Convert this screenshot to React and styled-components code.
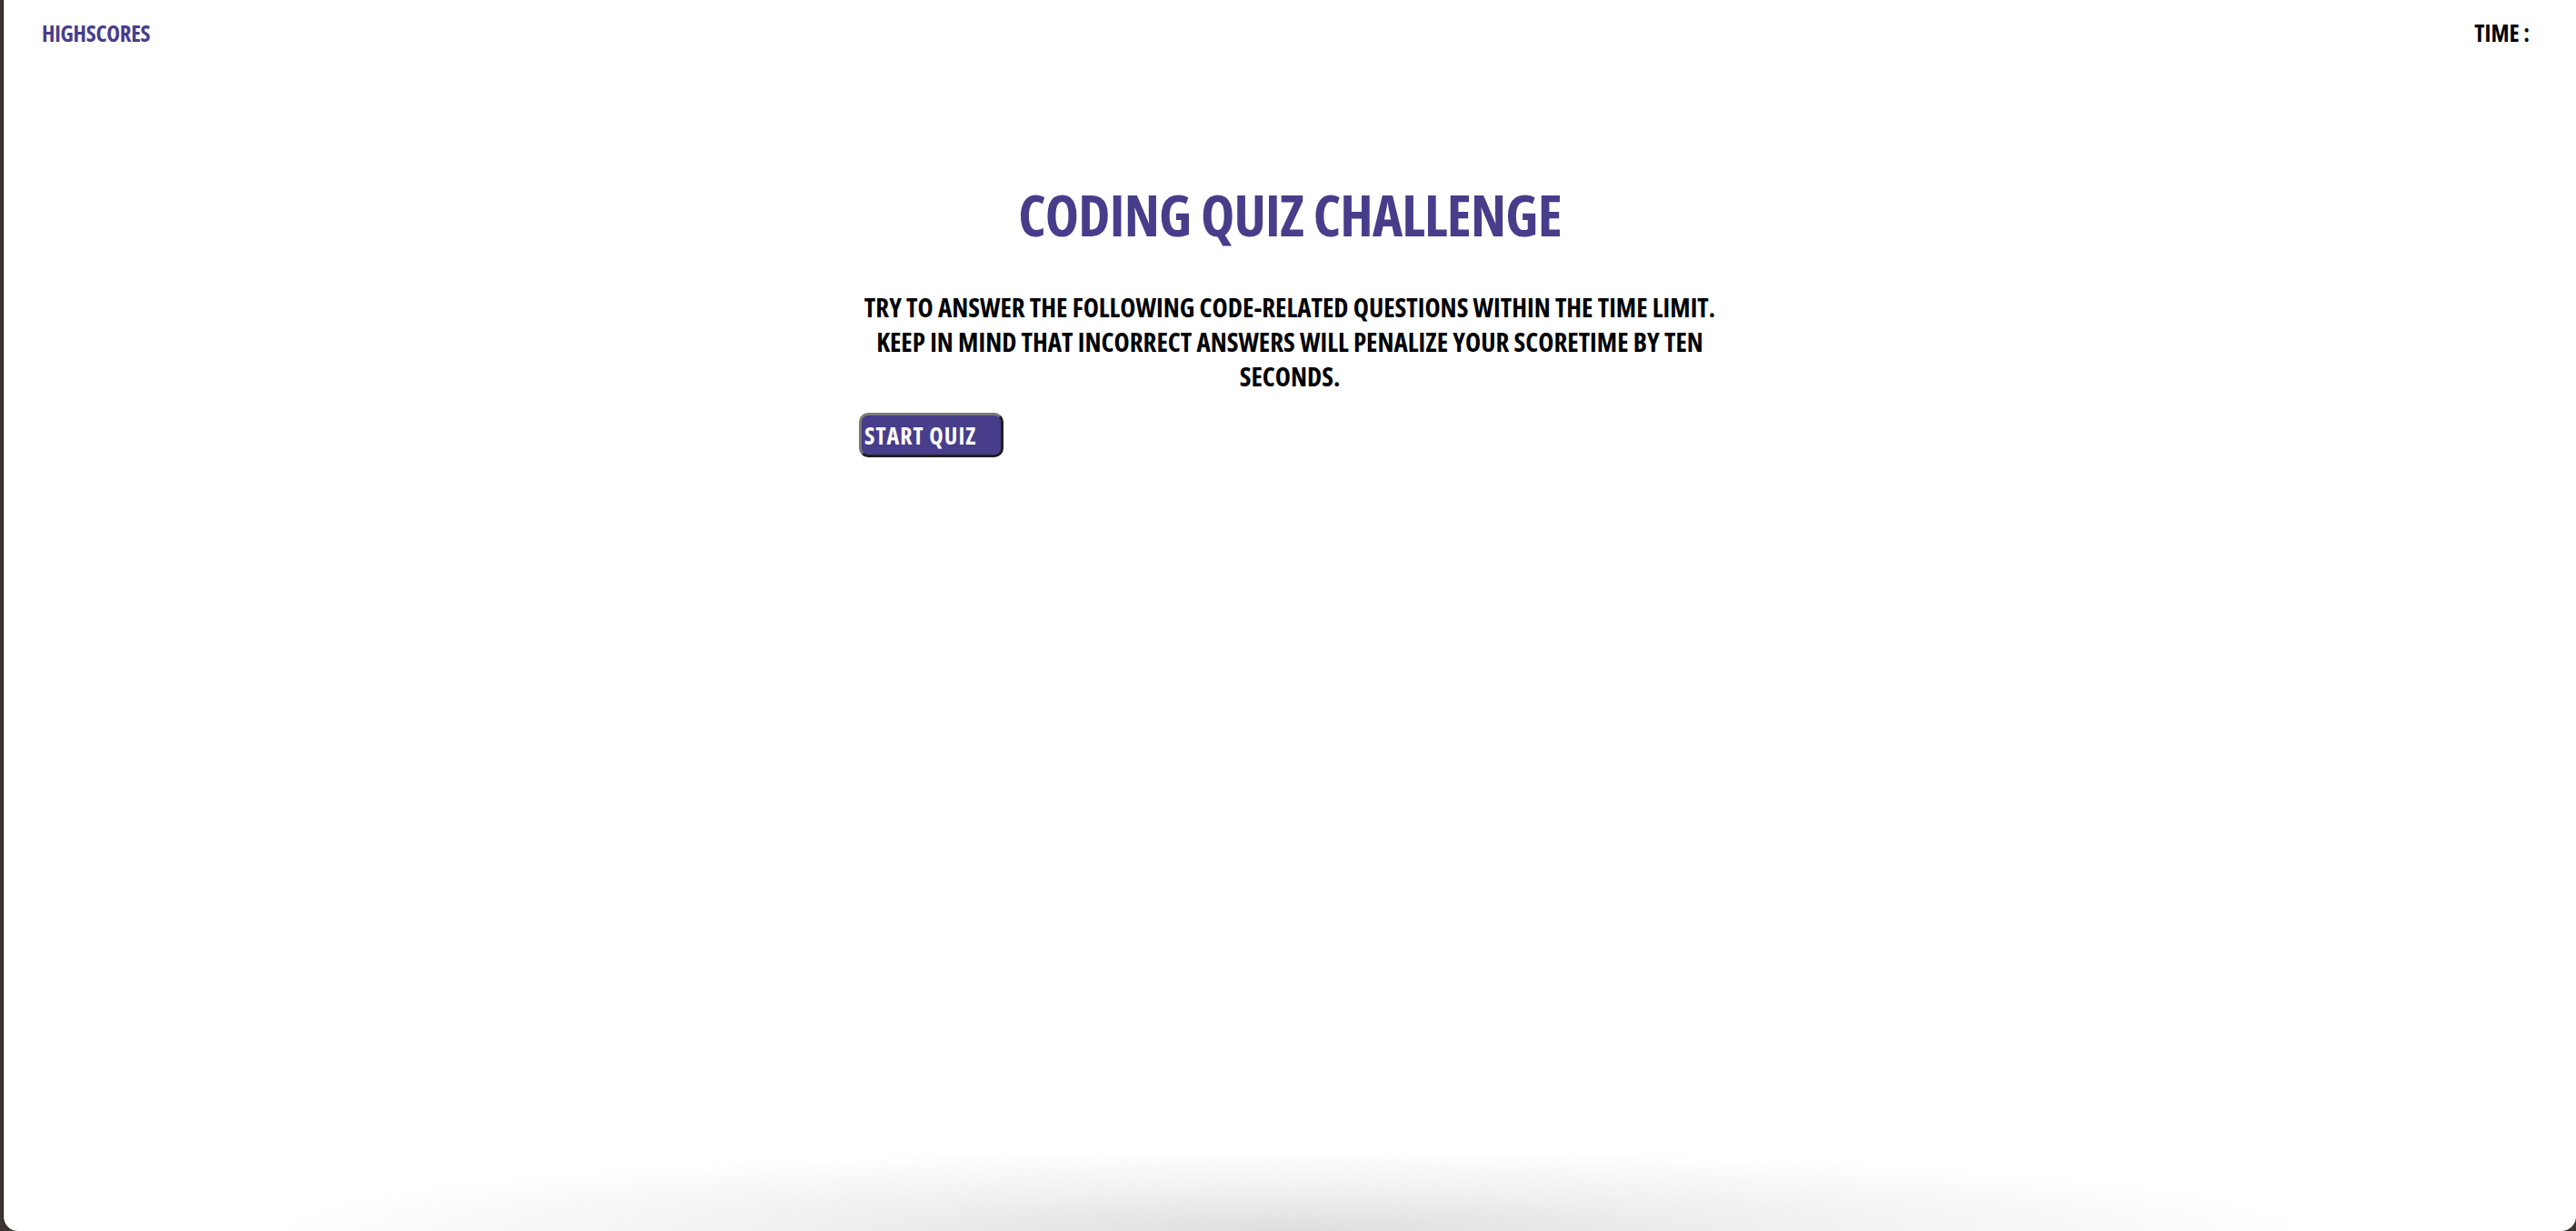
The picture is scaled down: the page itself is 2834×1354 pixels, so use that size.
import React from "react";
import styled, { createGlobalStyle } from "styled-components";

const GlobalStyle = createGlobalStyle`
  html, body {
    margin: 0;
    padding: 0;
    background: #3b3430;
  }
  * { box-sizing: border-box; }
`;

const Frame = styled.div`
  margin-left: 3px;
  height: 1354px;
  border-left: 1px solid #111;
  border-bottom-left-radius: 16px;
  border-bottom-right-radius: 16px;
  background:
    radial-gradient(1120px 90px at 50% 100%, #dedede 0%, #efefef 45%, rgba(255, 255, 255, 0) 100%),
    #fff;
  font-family: "Open Sans", "Roboto", sans-serif;
  font-stretch: 75%;
  font-weight: 700;
  text-transform: uppercase;
  overflow: hidden;
`;

const Header = styled.header`
  display: flex;
  justify-content: space-between;
  align-items: center;
  padding: 16px 51px 0 42px;
  height: 56px;
`;

const HighscoreLink = styled.a`
  color: #483d8b;
  font-size: 25px;
  line-height: 40px;
  letter-spacing: -0.3px;
  text-decoration: none;
  cursor: pointer;
`;

const Timer = styled.div`
  color: #000;
  font-size: 26px;
  line-height: 40px;
`;

const Main = styled.main`
  width: 948px;
  margin: 144px auto 0;
  display: flex;
  flex-direction: column;
`;

const Title = styled.h1`
  margin: 0;
  font-size: 63px;
  line-height: 72px;
  letter-spacing: -0.8px;
  font-weight: 700;
  color: #483d8b;
  text-align: center;
  white-space: nowrap;
`;

const Intro = styled.p`
  margin: 47px -6px 0;
  font-size: 29px;
  line-height: 38px;
  color: #000;
  text-align: center;
`;

const StartButton = styled.button`
  align-self: flex-start;
  margin-top: 21px;
  width: 159px;
  height: 49px;
  padding: 0 0 0 3px;
  text-align: left;
  font-family: inherit;
  font-stretch: 75%;
  font-weight: 700;
  font-size: 26px;
  letter-spacing: 1px;
  text-transform: uppercase;
  color: #fff;
  background: #483d8b;
  border: 3px solid;
  border-color: #7a7a7a #1f1f1f #1f1f1f #7a7a7a;
  border-radius: 10px;
  cursor: pointer;
`;

export default function App() {
  return (
    <>
      <GlobalStyle />
      <Frame>
        <Header>
          <HighscoreLink>Highscores</HighscoreLink>
          <Timer>Time :</Timer>
        </Header>
        <Main>
          <Title>Coding Quiz Challenge</Title>
          <Intro>
            Try to answer the following code-related questions within the time limit. Keep in mind
            that incorrect answers will penalize your scoretime by ten seconds.
          </Intro>
          <StartButton>Start Quiz</StartButton>
        </Main>
      </Frame>
    </>
  );
}
